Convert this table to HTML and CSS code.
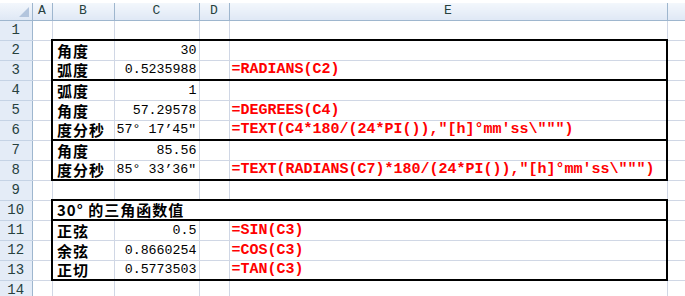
FILE: index.html
```html
<!DOCTYPE html>
<html lang="zh-CN">
<head>
    <meta charset="UTF-8">
    <title>三角函数</title>
    <link rel="stylesheet" href="styles.css">
</head>
<body>
    <table class="sheet">
        <colgroup>
            <col class="col-head">
            <col class="col-a">
            <col class="col-b">
            <col class="col-c">
            <col class="col-d">
            <col class="col-e">
            <col class="col-f">
        </colgroup>
        <thead>
            <tr>
                <th class="corner"><span class="corner-mark"></span></th>
                <th>A</th>
                <th>B</th>
                <th>C</th>
                <th>D</th>
                <th>E</th>
                <th></th>
            </tr>
        </thead>
        <tbody>
            <tr>
                <th>1</th><td></td><td></td><td></td><td></td><td></td><td></td>
            </tr>
            <tr>
                <th>2</th><td></td>
                <td class="label bt bl">角度</td>
                <td class="num bt">30</td>
                <td class="bt"></td>
                <td class="bt br"></td>
                <td></td>
            </tr>
            <tr>
                <th>3</th><td></td>
                <td class="label bb bl">弧度</td>
                <td class="num bb">0.5235988</td>
                <td class="bb"></td>
                <td class="formula bb br">=RADIANS(C2)</td>
                <td></td>
            </tr>
            <tr>
                <th>4</th><td></td>
                <td class="label bl">弧度</td>
                <td class="num">1</td>
                <td></td>
                <td class="br"></td>
                <td></td>
            </tr>
            <tr>
                <th>5</th><td></td>
                <td class="label bl">角度</td>
                <td class="num">57.29578</td>
                <td></td>
                <td class="formula br">=DEGREES(C4)</td>
                <td></td>
            </tr>
            <tr>
                <th>6</th><td></td>
                <td class="label bb bl">度分秒</td>
                <td class="dms bb">57° 17’45″</td>
                <td class="bb"></td>
                <td class="formula bb br">=TEXT(C4*180/(24*PI()),"[h]°mm'ss\""")</td>
                <td></td>
            </tr>
            <tr>
                <th>7</th><td></td>
                <td class="label bl">角度</td>
                <td class="num">85.56</td>
                <td></td>
                <td class="br"></td>
                <td></td>
            </tr>
            <tr>
                <th>8</th><td></td>
                <td class="label bb bl">度分秒</td>
                <td class="dms bb">85° 33’36″</td>
                <td class="bb"></td>
                <td class="formula bb br">=TEXT(RADIANS(C7)*180/(24*PI()),"[h]°mm'ss\""")</td>
                <td></td>
            </tr>
            <tr>
                <th>9</th><td></td><td></td><td></td><td></td><td></td><td></td>
            </tr>
            <tr>
                <th>10</th><td></td>
                <td class="label title bt bb bl br" colspan="4">30° 的三角函数值</td>
                <td></td>
            </tr>
            <tr>
                <th>11</th><td></td>
                <td class="label bl">正弦</td>
                <td class="num">0.5</td>
                <td></td>
                <td class="formula br">=SIN(C3)</td>
                <td></td>
            </tr>
            <tr>
                <th>12</th><td></td>
                <td class="label bl">余弦</td>
                <td class="num">0.8660254</td>
                <td></td>
                <td class="formula br">=COS(C3)</td>
                <td></td>
            </tr>
            <tr>
                <th>13</th><td></td>
                <td class="label bb bl">正切</td>
                <td class="num bb">0.5773503</td>
                <td class="bb"></td>
                <td class="formula bb br">=TAN(C3)</td>
                <td></td>
            </tr>
            <tr>
                <th>14</th><td></td><td></td><td></td><td></td><td></td><td></td>
            </tr>
        </tbody>
    </table>
</body>
</html>
```

FILE: styles.css
```css
* {
    margin: 0;
    padding: 0;
    box-sizing: border-box;
}

body {
    background: #fff;
    overflow: hidden;
    font-family: "Liberation Mono", "Noto Sans CJK SC", monospace;
    padding-top: 3px;
}

.sheet {
    border-collapse: collapse;
    table-layout: fixed;
    width: 685px;
}

.col-head { width: 32px; }
.col-a { width: 20px; }
.col-b { width: 62px; }
.col-c { width: 85px; }
.col-d { width: 30px; }
.col-e { width: 438px; }
.col-f { width: 18px; }

/* headers */
thead th {
    height: 17px;
    background: linear-gradient(#f3f7fc, #dfe8f5);
    border: 1px solid #9eb6ce;
    border-top: none;
    font-family: "Liberation Mono", monospace;
    font-weight: normal;
    font-size: 13px;
    color: #27413e;
    line-height: 16px;
}

tbody th {
    height: 20px;
    background: #e4ecf7;
    border: 1px solid #9eb6ce;
    border-left: none;
    border-right: 1px solid #9eb6ce;
    font-family: "Liberation Mono", monospace;
    font-weight: normal;
    font-size: 14px;
    line-height: 17px;
    color: #27413e;
    text-align: center;
    vertical-align: middle;
}

tbody tr th {
    border-top: 1px solid #c5d3e5;
    border-bottom: 1px solid #c5d3e5;
}

.corner {
    position: relative;
    border-left: none;
}

.corner-mark {
    position: absolute;
    right: 3px;
    bottom: 3px;
    width: 0;
    height: 0;
    border-left: 10px solid transparent;
    border-bottom: 10px solid #b3c5dd;
}

/* cells */
td {
    height: 20px;
    border: 1px solid #d0d7e5;
    padding: 0 2px 1px 3px;
    vertical-align: bottom;
    white-space: nowrap;
    overflow: hidden;
    color: #000;
    line-height: 17px;
}

.label {
    font-family: "Noto Sans CJK SC", sans-serif;
    font-weight: bold;
    font-size: 15px;
    line-height: 18px;
    padding: 0 0 0 4px;
    letter-spacing: 1px;
    overflow: visible;
}

.title {
    letter-spacing: 1px;
}

.num {
    text-align: right;
    font-size: 13.3px;
}

.dms {
    font-size: 13.3px;
    padding-left: 2px;
}

.formula {
    color: #ff0000;
    font-weight: bold;
    font-size: 15px;
    padding-left: 2px;
}

/* thick outlines around each block */
.bt { border-top: 2px solid #000; }
.bb { border-bottom: 2px solid #000; }
.bl { border-left: 2px solid #000; }
.br { border-right: 2px solid #000; }
```
